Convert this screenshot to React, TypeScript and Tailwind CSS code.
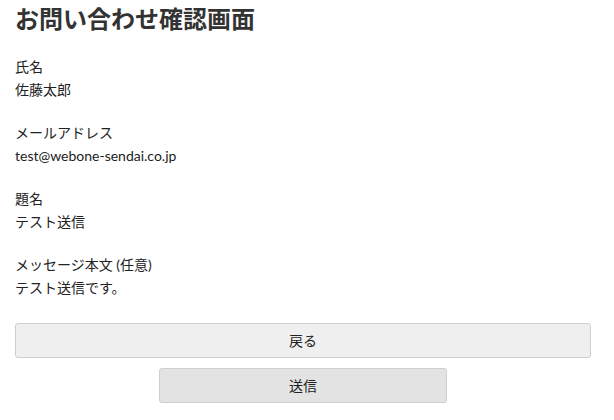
import { FC } from 'react';

type Field = { label: string; value: string };

const fields: Field[] = [
    { label: '氏名', value: '佐藤太郎' },
    { label: 'メールアドレス', value: 'test@webone-sendai.co.jp' },
    { label: '題名', value: 'テスト送信' },
    { label: 'メッセージ本文 (任意)', value: 'テスト送信です。' },
];

const App: FC = () => {
    return (
        <main className="min-h-[420px] bg-white font-['Lato','Noto_Sans_CJK_JP',sans-serif] text-[#222]">
            <div className="w-[576px] pl-[15px] box-content">
                <h1 className="font-['Noto_Sans_CJK_JP',sans-serif] text-[24px] font-bold leading-[36px] text-[#333]">
                    お問い合わせ確認画面
                </h1>
                <dl className="mt-[19px] flex flex-col gap-5">
                    {fields.map((field) => (
                        <div key={field.label} className="text-[14px] leading-[23px]">
                            <dt>{field.label}</dt>
                            <dd>{field.value}</dd>
                        </div>
                    ))}
                </dl>
                <div className="mt-[24px] flex flex-col items-center gap-[10px]">
                    <button
                        type="button"
                        className="h-[35px] w-full rounded-[3px] border border-[#cfcfcf] bg-[#efefef] text-[14px] text-[#222]"
                    >
                        戻る
                    </button>
                    <button
                        type="submit"
                        className="h-[35px] w-[288px] rounded-[3px] border border-[#cfcfcf] bg-[#e3e3e3] text-[14px] text-[#222]"
                    >
                        送信
                    </button>
                </div>
            </div>
        </main>
    );
};

export default App;
